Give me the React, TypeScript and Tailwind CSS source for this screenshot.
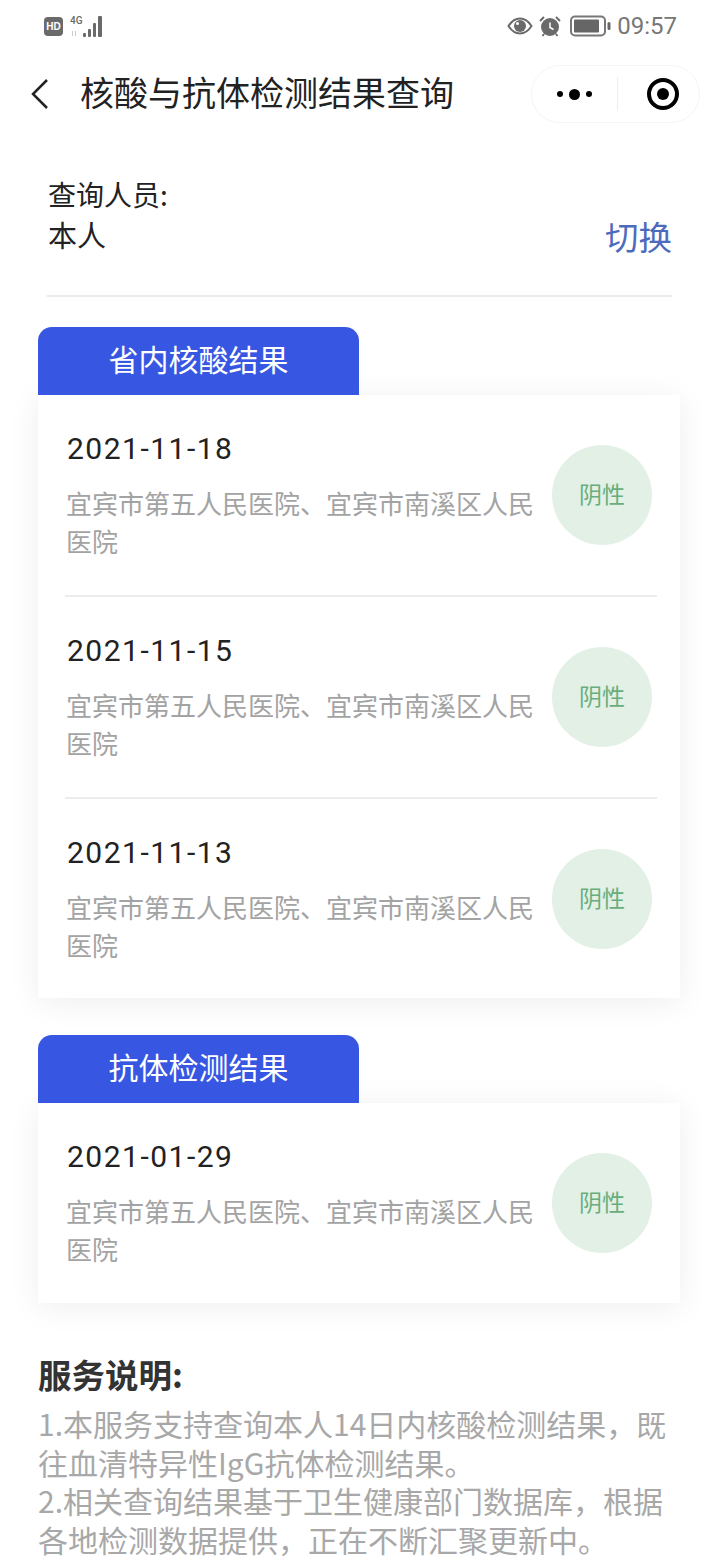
import React from 'react';

const CJK = "font-['Noto_Sans_CJK_SC',sans-serif]";

const StatusBar: React.FC = () => (
  <div className="h-[52px] px-[44px] flex items-center justify-between text-[#666]">
    <div className="flex items-center gap-[7px] mt-[1px]">
      <div className="w-[19px] h-[19px] rounded-[4px] bg-[#6a6a6a] flex items-center justify-center text-white text-[10px] font-bold leading-none font-['Liberation_Sans',sans-serif]">HD</div>
      <svg width="34" height="24" viewBox="0 0 34 24" fill="#6a6a6a">
        <text x="0" y="9" fontSize="10" fontWeight="500" fontFamily="Roboto, sans-serif">4G</text>
        <rect x="2" y="16" width="1" height="5" fill="#ccc" />
        <rect x="5" y="16" width="1" height="5" fill="#ccc" />
        <rect x="13" y="18" width="3" height="4" rx="1" />
        <rect x="18" y="14" width="3" height="8" rx="1" />
        <rect x="23" y="8" width="3" height="14" rx="1" />
        <rect x="28" y="1" width="4" height="21" rx="1" />
      </svg>
    </div>
    <div className="flex items-center -mr-[1px] mt-[-1px]">
      <svg width="26" height="18" viewBox="0 0 26 18" className="mr-[6px]">
        <path d="M1.5 9C5 3.5 9 1.5 13 1.5S21 3.500 24.500 9C21 14.500 17 16.500 13 16.500S5 14.500 1.500 9Z" fill="none" stroke="#6a6a6a" strokeWidth="2" />
        <circle cx="13" cy="9" r="6" fill="#6a6a6a" />
        <circle cx="10.500" cy="6.500" r="1.500" fill="#fff" />
      </svg>
      <svg width="22" height="22" viewBox="0 0 22 22" className="mr-[9px]">
        <circle cx="11" cy="12" r="9" fill="#6a6a6a" />
        <path d="M11 7.500V12.500L14.500 14.500" fill="none" stroke="#fff" strokeWidth="1.500" />
        <path d="M1 6L5 2M21 6L17 2M5 19L3.500 21M17 19L18.500 21" stroke="#6a6a6a" strokeWidth="2" fill="none" />
      </svg>
      <svg width="41" height="22" viewBox="0 0 41 22" className="mr-[6px]">
        <rect x="1" y="1.500" width="34" height="19" rx="4" fill="none" stroke="#777" strokeWidth="2" />
        <rect x="4" y="4.500" width="25" height="13" rx="1" fill="#666" />
        <rect x="37.500" y="7" width="3" height="8" rx="1.500" fill="#666" />
      </svg>
      <span className="text-[24px] leading-none text-[#777] font-['Roboto',sans-serif]">09:57</span>
    </div>
  </div>
);

const NavBar: React.FC = () => (
  <div className="h-[84px] pl-[30px] pr-[20px] flex items-center">
    <svg width="20" height="32" viewBox="0 0 20 32" className="mr-[30px] shrink-0">
      <path d="M17 2L3 16L17 30" fill="none" stroke="#222" strokeWidth="2.500" />
    </svg>
    <h1 className={`text-[34px] leading-none text-[#222] font-normal whitespace-nowrap mb-[4px] ${CJK}`}>核酸与抗体检测结果查询</h1>
    <div className="ml-auto w-[169px] h-[58px] rounded-full border border-[#f5f5f5] flex items-center">
      <div className="w-[85px] flex items-center justify-center gap-[6px]">
        <span className="w-[6px] h-[6px] rounded-full bg-black" />
        <span className="w-[11px] h-[11px] rounded-full bg-black" />
        <span className="w-[6px] h-[6px] rounded-full bg-black" />
      </div>
      <div className="w-px h-[34px] bg-[#eeeeee]" />
      <div className="flex-1 flex items-center justify-center pl-[8px]">
        <div className="w-[32px] h-[32px] rounded-full border-[4px] border-black flex items-center justify-center">
          <span className="w-[12px] h-[12px] rounded-full bg-black" />
        </div>
      </div>
    </div>
  </div>
);

const ResultRow: React.FC<{ date: string; height: string; last?: boolean }> = ({ date, height, last }) => (
  <div className={`${height} ml-[27px] mr-[23px] flex items-start ${last ? '' : 'border-b-2 border-[#ececec]'}`}>
    <div className="w-[487px] shrink-0 pl-[2px] pt-[35px]">
      <div className="text-[30px] leading-[38px] text-[#222] tracking-[1.500px] font-['Roboto',sans-serif]">{date}</div>
      <p className={`mt-[16px] -ml-[1px] w-[470px] text-[26px] leading-[38px] text-[#a3a3a3] ${CJK}`}>宜宾市第五人民医院、宜宾市南溪区人民医院</p>
    </div>
    <div className="mt-[50px] w-[100px] h-[100px] rounded-full bg-[#e2f0e5] flex items-center justify-center text-[23px] text-[#68ae7c] pb-[4px] shrink-0">
      <span className={CJK}>阴性</span>
    </div>
  </div>
);

const Section: React.FC<{ title: string; dates: string[]; lastHeight: string; className?: string }> = ({ title, dates, lastHeight, className }) => (
  <section className={`mx-[38px] ${className ?? ''}`}>
    <div className={`relative z-10 w-[321px] h-[68px] rounded-t-[14px] bg-[#3757e3] text-white text-[30px] leading-none flex items-center justify-center pb-[7px] ${CJK}`}>{title}</div>
    <div className="w-[642px] bg-white shadow-[0_4px_30px_rgba(0,0,0,0.07)]">
      {dates.map((d, i) => {
        const last = i === dates.length - 1;
        return <ResultRow key={d} date={d} last={last} height={last ? lastHeight : 'h-[202px]'} />;
      })}
    </div>
  </section>
);

export default function App() {
  return (
    <div className={`relative w-[720px] h-[1560px] overflow-hidden bg-white ${CJK}`}>
      <StatusBar />
      <NavBar />
      <div className="ml-[47px] mr-[48px] mt-[41px] h-[120px] border-b-2 border-[#ebebeb] flex justify-between">
        <div className="text-[#222] pl-[1px]">
          <div className="text-[28px] leading-[40px] -mt-[3px]">查询人员:</div>
          <div className="text-[29px] leading-[40px]">本人</div>
        </div>
        <div className="text-[33.500px] leading-[40px] text-[#4d6bbd] mt-[39px]">切换</div>
      </div>
      <Section title="省内核酸结果" dates={['2021-11-18', '2021-11-15', '2021-11-13']} lastHeight="h-[199px]" className="mt-[30px]" />
      <Section title="抗体检测结果" dates={['2021-01-29']} lastHeight="h-[200px]" className="mt-[37px]" />
      <div className="ml-[38px] mr-[39px] mt-[51px]">
        <h2 className="text-[33.500px] leading-[40px] font-bold text-[#333]">服务说明:</h2>
        <p className="mt-[10px] text-[30px] leading-[38.500px] text-[#a8a8a8] w-[642px]">
          1.本服务支持查询本人14日内核酸检测结果，既往血清特异性IgG抗体检测结果。
          <br />
          2.相关查询结果基于卫生健康部门数据库，根据各地检测数据提供，正在不断汇聚更新中。
        </p>
      </div>
    </div>
  );
}
